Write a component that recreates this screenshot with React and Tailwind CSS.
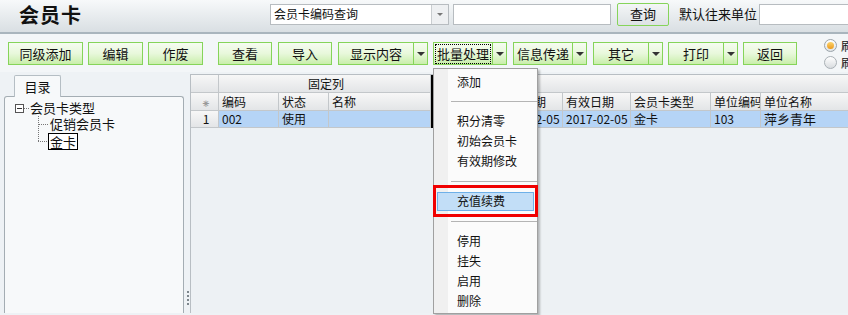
import React from "react";

const F = { fontFamily: '"Noto Sans CJK SC", "Noto Sans", sans-serif' };

function Btn({ w, children }) {
  return (
    <div className={`h-[23px] ${w} shrink-0 whitespace-nowrap border border-[#86d45a] bg-gradient-to-b from-[#f6fcf1] via-[#e8f8db] to-[#c9eeaa] flex items-center justify-center text-[13px] text-[#111]`}>
      {children}
    </div>
  );
}

function Split({ w, children, focus }) {
  return (
    <div className="h-[23px] shrink-0 whitespace-nowrap flex border border-[#86d45a] bg-gradient-to-b from-[#f6fcf1] via-[#e8f8db] to-[#c9eeaa] text-[13px] text-[#111]">
      <div className={`${w} flex items-center justify-center`}>
        {focus ? <span className="border border-dotted border-black px-[1px] leading-[18px]">{children}</span> : children}
      </div>
      <div className="w-[14px] border-l border-[#86d45a] flex items-center justify-center">
        <div className="w-0 h-0 border-l-[4px] border-r-[4px] border-t-[4px] border-l-transparent border-r-transparent border-t-[#333]" />
      </div>
    </div>
  );
}

function HCell({ w, children, className = "" }) {
  return (
    <div className={`${w} h-full shrink-0 overflow-hidden whitespace-nowrap border-r border-b border-[#c3c7ca] bg-gradient-to-b from-[#f7f7f7] to-[#e3e5e7] flex items-center pl-[3px] text-[12px] text-[#111] ${className}`}>
      {children}
    </div>
  );
}

function DCell({ w, children, className = "" }) {
  return (
    <div className={`${w} h-full shrink-0 overflow-hidden whitespace-nowrap border-r border-b border-[#c3c7ca] flex items-center pl-[3px] text-[12px] text-[#111] ${className}`}>
      {children}
    </div>
  );
}

function MItem({ children, hl }) {
  return (
    <div className="h-[20px] flex items-center whitespace-nowrap">
      {hl ? (
        <div className="ml-[3px] w-[97px] h-[19px] border border-[#6eb0e8] bg-[#c2def7] flex items-center pl-[19px]">{children}</div>
      ) : (
        <div className="pl-[23px]">{children}</div>
      )}
    </div>
  );
}

function MSep({ h }) {
  return (
    <div className={`${h} flex items-center`}>
      <div className="ml-[17px] w-[86px] h-[1px] bg-[#b4b4b4]" />
    </div>
  );
}

export default function App() {
  return (
    <div style={F} className="relative w-[848px] h-[315px] overflow-hidden bg-[#eef2f5] text-[#111]">
      {/* header */}
      <div className="h-[34px] border-b-[2px] border-[#a9b5bd] bg-gradient-to-b from-[#f7f9fa] to-[#d9dfe3] flex items-center overflow-hidden whitespace-nowrap">
        <div className="w-[270px] shrink-0 pl-[19px] text-[20px] font-bold tracking-[1px] leading-none pb-[2px]">会员卡</div>
        <div className="w-[179px] shrink-0 h-[21px] bg-white border border-[#b7bcc0] flex items-center mb-[4px]">
          <div className="flex-1 pl-[3px] text-[12px]">会员卡编码查询</div>
          <div className="w-[17px] h-full border-l border-[#c9cdd0] bg-[#eef0f2] flex items-center justify-center">
            <div className="w-0 h-0 border-l-[3px] border-r-[3px] border-t-[3px] border-l-transparent border-r-transparent border-t-[#777]" />
          </div>
        </div>
        <div className="ml-[4px] w-[158px] shrink-0 h-[21px] bg-white border border-[#b7bcc0] mb-[4px]" />
        <div className="ml-[6px] w-[52px] shrink-0 h-[23px] rounded-[2px] border border-[#86d45a] bg-gradient-to-b from-[#f4f6f7] to-[#dde2e5] flex items-center justify-center text-[13px] mb-[4px]">查询</div>
        <div className="ml-[10px] w-[76px] shrink-0 text-[13px] mb-[4px]">默认往来单位</div>
        <div className="ml-[4px] w-[100px] shrink-0 h-[21px] bg-white border border-[#b7bcc0] mb-[4px]" />
      </div>

      {/* toolbar */}
      <div className="h-[38px] bg-[#f3f6f8] flex items-start pt-[8px] pl-[8px] whitespace-nowrap">
        <div className="flex gap-[5px] shrink-0">
          <Btn w="w-[75px]">同级添加</Btn>
          <Btn w="w-[55px]">编辑</Btn>
          <Btn w="w-[55px]">作废</Btn>
        </div>
        <div className="flex shrink-0 ml-[15px]">
          <Btn w="w-[54px]">查看</Btn>
          <div className="w-[6px]" />
          <Btn w="w-[54px]">导入</Btn>
          <div className="w-[6px]" />
          <Split w="w-[74px]">显示内容</Split>
          <div className="w-[5px]" />
          <Split w="w-[58px]" focus>批量处理</Split>
          <div className="w-[6px]" />
          <Split w="w-[58px]">信息传递</Split>
          <div className="w-[6px]" />
          <Split w="w-[54px]">其它</Split>
          <div className="w-[5px]" />
          <Split w="w-[54px]">打印</Split>
          <div className="w-[5px]" />
          <Btn w="w-[54px]">返回</Btn>
        </div>
        <div className="ml-[27px] -mt-[3px] shrink-0 flex flex-col gap-[4px] text-[12px]">
          <div className="flex items-center gap-[4px]">
            <div className="w-[13px] h-[13px] rounded-full border border-[#9aa3aa] bg-gradient-to-b from-white to-[#dfe3e6] flex items-center justify-center">
              <div className="w-[7px] h-[7px] rounded-full bg-gradient-to-b from-[#fbd46a] to-[#ec9a10]" />
            </div>
            <span className="leading-[13px]">刷新</span>
          </div>
          <div className="flex items-center gap-[4px]">
            <div className="w-[13px] h-[13px] rounded-full border border-[#a9b0b5] bg-gradient-to-b from-white to-[#d8dcdf]" />
            <span className="leading-[13px]">刷新</span>
          </div>
        </div>
      </div>

      {/* body */}
      <div className="flex h-[241px] pt-[2px]">
        {/* left panel */}
        <div className="w-[186px] shrink-0 pl-[4px] flex flex-col">
          <div className="ml-[10px] w-[47px] h-[22px] border border-b-0 border-[#b5bec4] rounded-t-[2px] bg-[#f7f9fa] flex items-center justify-center text-[13px] relative top-[1px]">目录</div>
          <div className="flex-1 w-[180px] border border-[#a4adb3] border-b-0 rounded-t-[3px] bg-[#f7f9fa] pt-[3px] text-[13px] whitespace-nowrap">
            <div className="flex items-center h-[16px] leading-[16px] pl-[10px]">
              <div className="w-[9px] h-[9px] border border-[#555] flex items-center justify-center bg-white">
                <div className="w-[5px] h-[1px] bg-[#333]" />
              </div>
              <div className="w-[5px] border-t border-dotted border-[#777]" />
              <span className="ml-[1px]">会员卡类型</span>
            </div>
            <div className="relative pl-[29px]">
              <div className="absolute left-[33px] top-0 h-[25px] border-l border-dotted border-[#777]" />
              <div className="flex items-center h-[16px] leading-[16px]">
                <div className="w-[10px] border-t border-dotted border-[#777] ml-[4px]" />
                <span className="ml-[2px]">促销会员卡</span>
              </div>
              <div className="flex items-center h-[18px] leading-[16px]">
                <div className="w-[9px] border-t border-dotted border-[#777] ml-[4px]" />
                <span className="ml-[1px] border border-black px-[1px] leading-[15px] bg-white">金卡</span>
              </div>
            </div>
          </div>
        </div>
        {/* splitter */}
        <div className="w-[4px] shrink-0 flex flex-col justify-end pb-[8px] items-center">
          <div className="flex flex-col gap-[2px]">
            <div className="w-[2px] h-[2px] bg-[#7d868c]" />
            <div className="w-[2px] h-[2px] bg-[#7d868c]" />
            <div className="w-[2px] h-[2px] bg-[#7d868c]" />
            <div className="w-[2px] h-[2px] bg-[#7d868c]" />
          </div>
        </div>
        {/* grid */}
        <div className="flex-1 border-l border-t border-[#b8bec3] bg-[#edf1f4] overflow-hidden">
          <div className="flex h-[18px] w-[700px]">
            <HCell w="w-[28px]" />
            <HCell w="w-[212px]" className="justify-center pl-0">固定列</HCell>
            <div className="w-[2px] h-full bg-black shrink-0" />
            <HCell w="w-[450px]" />
          </div>
          <div className="flex h-[18px] w-[700px]">
            <HCell w="w-[28px]" className="justify-center pl-0 text-[#999] text-[10px]">⁕</HCell>
            <HCell w="w-[60px]">编码</HCell>
            <HCell w="w-[50px]">状态</HCell>
            <HCell w="w-[102px]">名称</HCell>
            <div className="w-[2px] h-full bg-black shrink-0" />
            <HCell w="w-[62px]">开卡日期</HCell>
            <HCell w="w-[68px]">生效日期</HCell>
            <HCell w="w-[68px]">有效日期</HCell>
            <HCell w="w-[80px]">会员卡类型</HCell>
            <HCell w="w-[50px]" className="pl-[1px]">单位编码</HCell>
            <HCell w="w-[100px]">单位名称</HCell>
          </div>
          <div className="flex h-[17px] w-[700px]">
            <HCell w="w-[28px]" className="justify-center pl-0">1</HCell>
            <DCell w="w-[60px]" className="bg-[#b5d4f6]">002</DCell>
            <DCell w="w-[50px]" className="bg-[#b5d4f6]">使用</DCell>
            <DCell w="w-[102px]" className="bg-[#b5d4f6]" />
            <div className="w-[2px] h-full bg-black shrink-0" />
            <DCell w="w-[62px]" className="bg-[#b5d4f6]" />
            <DCell w="w-[68px]" className="bg-[#b5d4f6] pl-[2px]">2017-02-05</DCell>
            <DCell w="w-[68px]" className="bg-[#b5d4f6]">2017-02-05</DCell>
            <DCell w="w-[80px]" className="bg-[#b5d4f6]">金卡</DCell>
            <DCell w="w-[50px]" className="bg-[#b5d4f6]">103</DCell>
            <DCell w="w-[100px]" className="bg-[#b5d4f6] text-[13px]">萍乡青年</DCell>
          </div>
        </div>
      </div>

      {/* dropdown menu */}
      <div className="absolute left-[433px] top-[68px] w-[105px] h-[246px] bg-[#fbfbfb] border border-[#a0a0a0] shadow-[2px_2px_2px_rgba(0,0,0,0.25)] text-[12px] pt-[3px]">
        <div className="absolute left-0 top-0 bottom-0 w-[14px] bg-[#f0f0f0]" />
        <div className="relative">
          <MItem>添加</MItem>
          <MSep h="h-[19px]" />
          <MItem>积分清零</MItem>
          <MItem>初始会员卡</MItem>
          <MItem>有效期修改</MItem>
          <MSep h="h-[20px]" />
          <MItem hl>充值续费</MItem>
          <MSep h="h-[20px]" />
          <MItem>停用</MItem>
          <MItem>挂失</MItem>
          <MItem>启用</MItem>
          <MItem>删除</MItem>
        </div>
      </div>

      {/* red highlight */}
      <div className="absolute left-[433px] top-[185px] w-[105px] h-[32px] border-[3px] border-[#f00000]" />
    </div>
  );
}
